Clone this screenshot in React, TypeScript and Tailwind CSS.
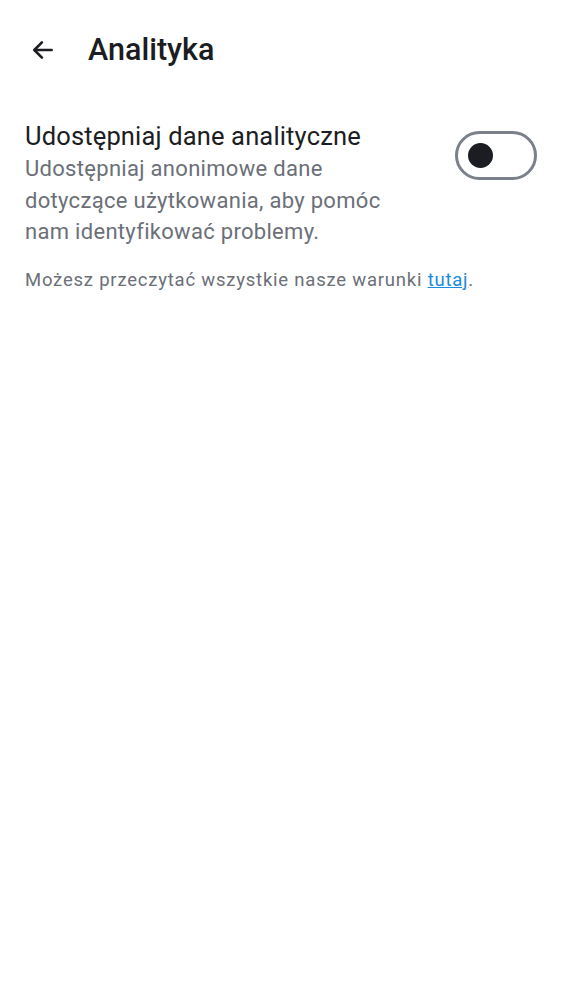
import { useState } from 'react';

export default function App() {
  const [enabled, setEnabled] = useState(false);

  return (
    <div className="min-h-[1000px] w-[562px] bg-white font-['Roboto',sans-serif]">
      <header className="flex h-[100px] items-center">
        <button className="ml-[19px] flex h-[48px] w-[48px] items-center justify-center text-[#1c1d22]">
          <svg width="26" height="26" viewBox="0 0 24 24" fill="none" stroke="currentColor" strokeWidth="2.4" strokeLinecap="round" strokeLinejoin="round">
            <path d="M20 12H4.5" />
            <path d="M11 5l-7 7 7 7" />
          </svg>
        </button>
        <h1 className="ml-[21px] text-[30.5px] font-medium text-[#1c1d22]">Analityka</h1>
      </header>

      <div className="flex items-start justify-between px-[25px] pt-[19px]">
        <div className="w-[375px]">
          <div className="text-[25.5px] leading-[34px] tracking-[0.15px] text-[#1c1d22]">Udostępniaj dane analityczne</div>
          <div className="text-[22px] leading-[31.5px] tracking-[0.3px] text-[#6b6f78]">
            Udostępniaj anonimowe dane dotyczące użytkowania, aby pomóc nam identyfikować problemy.
          </div>
        </div>
        <button
          onClick={() => setEnabled(!enabled)}
          className="mt-[12px] flex h-[49px] w-[82px] shrink-0 items-center rounded-full border-[3px] border-[#7b818a] px-[10px]"
        >
          <span className="block h-[25px] w-[25px] rounded-full bg-[#1c1d22]" />
        </button>
      </div>

      <p className="mt-[19px] px-[25px] text-[18.5px] tracking-[0.78px] text-[#6b6f78]">
        Możesz przeczytać wszystkie nasze warunki{' '}
        <a href="#" className="text-[#1a8ae0] underline">tutaj</a>.
      </p>
    </div>
  );
}
